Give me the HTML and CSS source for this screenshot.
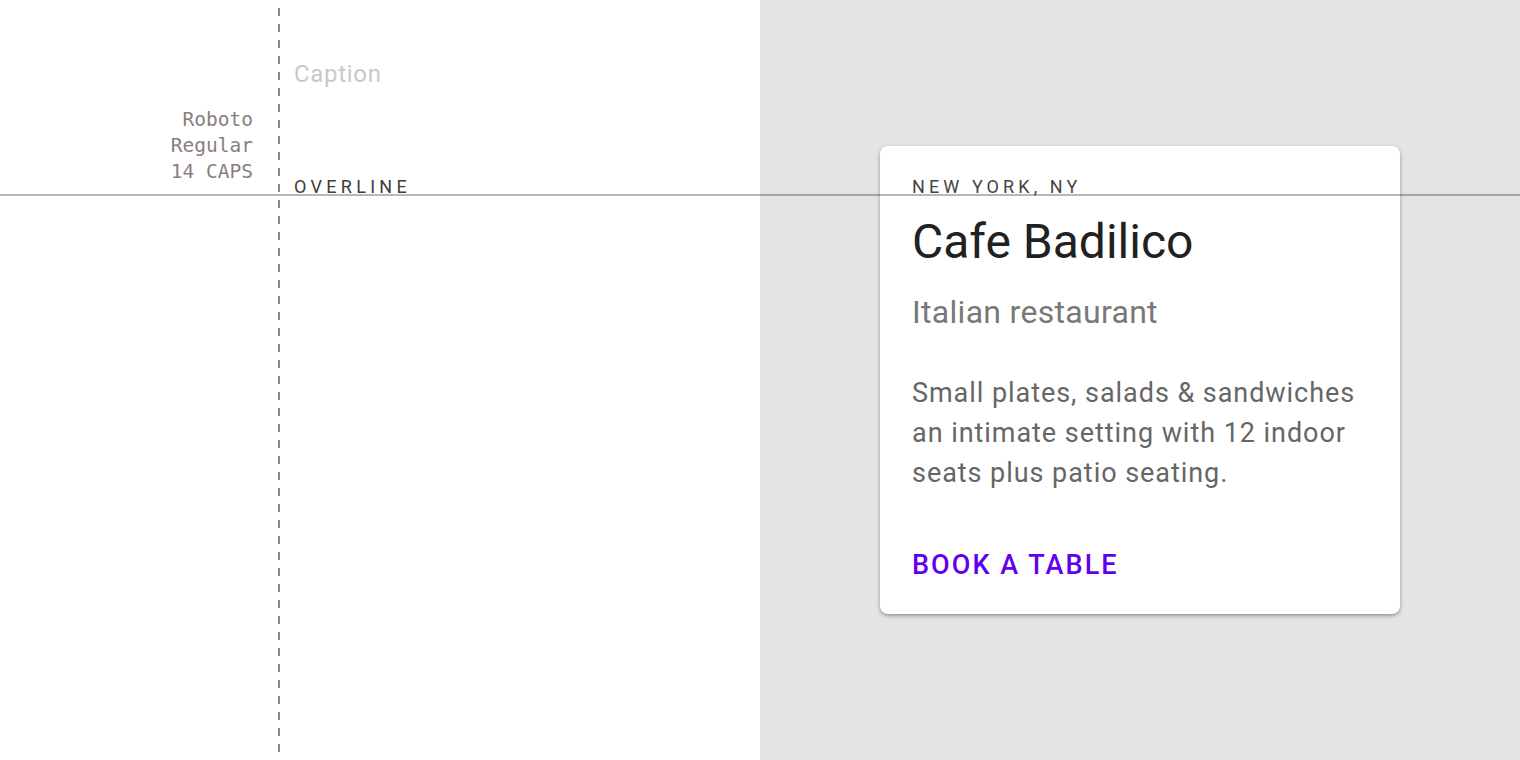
FILE: index.html
```html
<!DOCTYPE html>
<html>
<head>
<meta charset="utf-8">
<link rel="stylesheet" href="styles.css">
</head>
<body>
<div class="page">
  <section class="spec">
    <div class="labels">
      <div>Roboto</div>
      <div>Regular</div>
      <div>14 CAPS</div>
    </div>
    <div class="guide"></div>
    <div class="samples">
      <div class="caption">Caption</div>
      <div class="overline">OVERLINE</div>
    </div>
  </section>
  <section class="preview">
    <article class="card">
      <div class="card-overline">NEW YORK, NY</div>
      <h1 class="card-title">Cafe Badilico</h1>
      <div class="card-subtitle">Italian restaurant</div>
      <p class="card-body">Small plates, salads &amp; sandwiches an intimate setting with 12 indoor seats plus patio seating.</p>
      <div class="card-action">BOOK A TABLE</div>
    </article>
  </section>
  <div class="baseline-rule"></div>
</div>
</body>
</html>
```
FILE: styles.css
```css
html, body {
  margin: 0;
  padding: 0;
}
body {
  font-family: Roboto, "Noto Sans", sans-serif;
  width: 1520px;
  height: 760px;
  overflow: hidden;
}
.page {
  position: relative;
  display: flex;
  width: 1520px;
  height: 760px;
}
.spec {
  width: 760px;
  height: 760px;
  background: #ffffff;
  display: flex;
}
.labels {
  width: 253px;
  padding-top: 107px;
  box-sizing: border-box;
  text-align: right;
  font-family: "DejaVu Sans Mono", "Liberation Mono", monospace;
  font-size: 19.5px;
  line-height: 26px;
  color: #8a7e7e;
}
.guide {
  width: 2px;
  margin-left: 25px;
  height: 760px;
  background: repeating-linear-gradient(to bottom, transparent 0 8px, #888888 8px 16px);
}
.samples {
  margin-left: 14px;
  padding-top: 58px;
}
.caption {
  font-size: 24px;
  line-height: 32px;
  color: #c9c9c9;
  letter-spacing: 0.7px;
}
.overline {
  margin-top: 85px;
  font-size: 18px;
  line-height: 24px;
  letter-spacing: 4.3px;
  color: #3c3c3c;
}
.preview {
  width: 760px;
  height: 760px;
  background: #e4e4e4;
  padding: 146px 0 0 120px;
  box-sizing: border-box;
}
.card {
  width: 520px;
  height: 468px;
  box-sizing: border-box;
  background: #ffffff;
  border-radius: 8px;
  box-shadow: 0 2px 4px rgba(0, 0, 0, 0.28), 0 1px 2px rgba(0, 0, 0, 0.12);
  padding: 29px 32px 0 32px;
}
.card-overline {
  font-size: 18px;
  line-height: 24px;
  letter-spacing: 4.1px;
  color: #444444;
}
.card-title {
  margin: 15px 0 0 0;
  font-size: 48px;
  line-height: 56px;
  font-weight: 400;
  color: #212121;
}
.card-subtitle {
  margin-top: 22px;
  font-size: 32px;
  line-height: 40px;
  letter-spacing: 0.3px;
  color: #787878;
}
.card-body {
  margin: 41px 0 0 0;
  font-size: 27px;
  line-height: 40px;
  letter-spacing: 0.95px;
  color: #666666;
}
.card-action {
  margin-top: 54px;
  font-size: 27px;
  line-height: 36px;
  font-weight: 500;
  letter-spacing: 2.05px;
  color: #6200ee;
}
.baseline-rule {
  position: absolute;
  left: 0;
  top: 194px;
  width: 1520px;
  height: 2px;
  background: rgba(0, 0, 0, 0.28);
}
```
